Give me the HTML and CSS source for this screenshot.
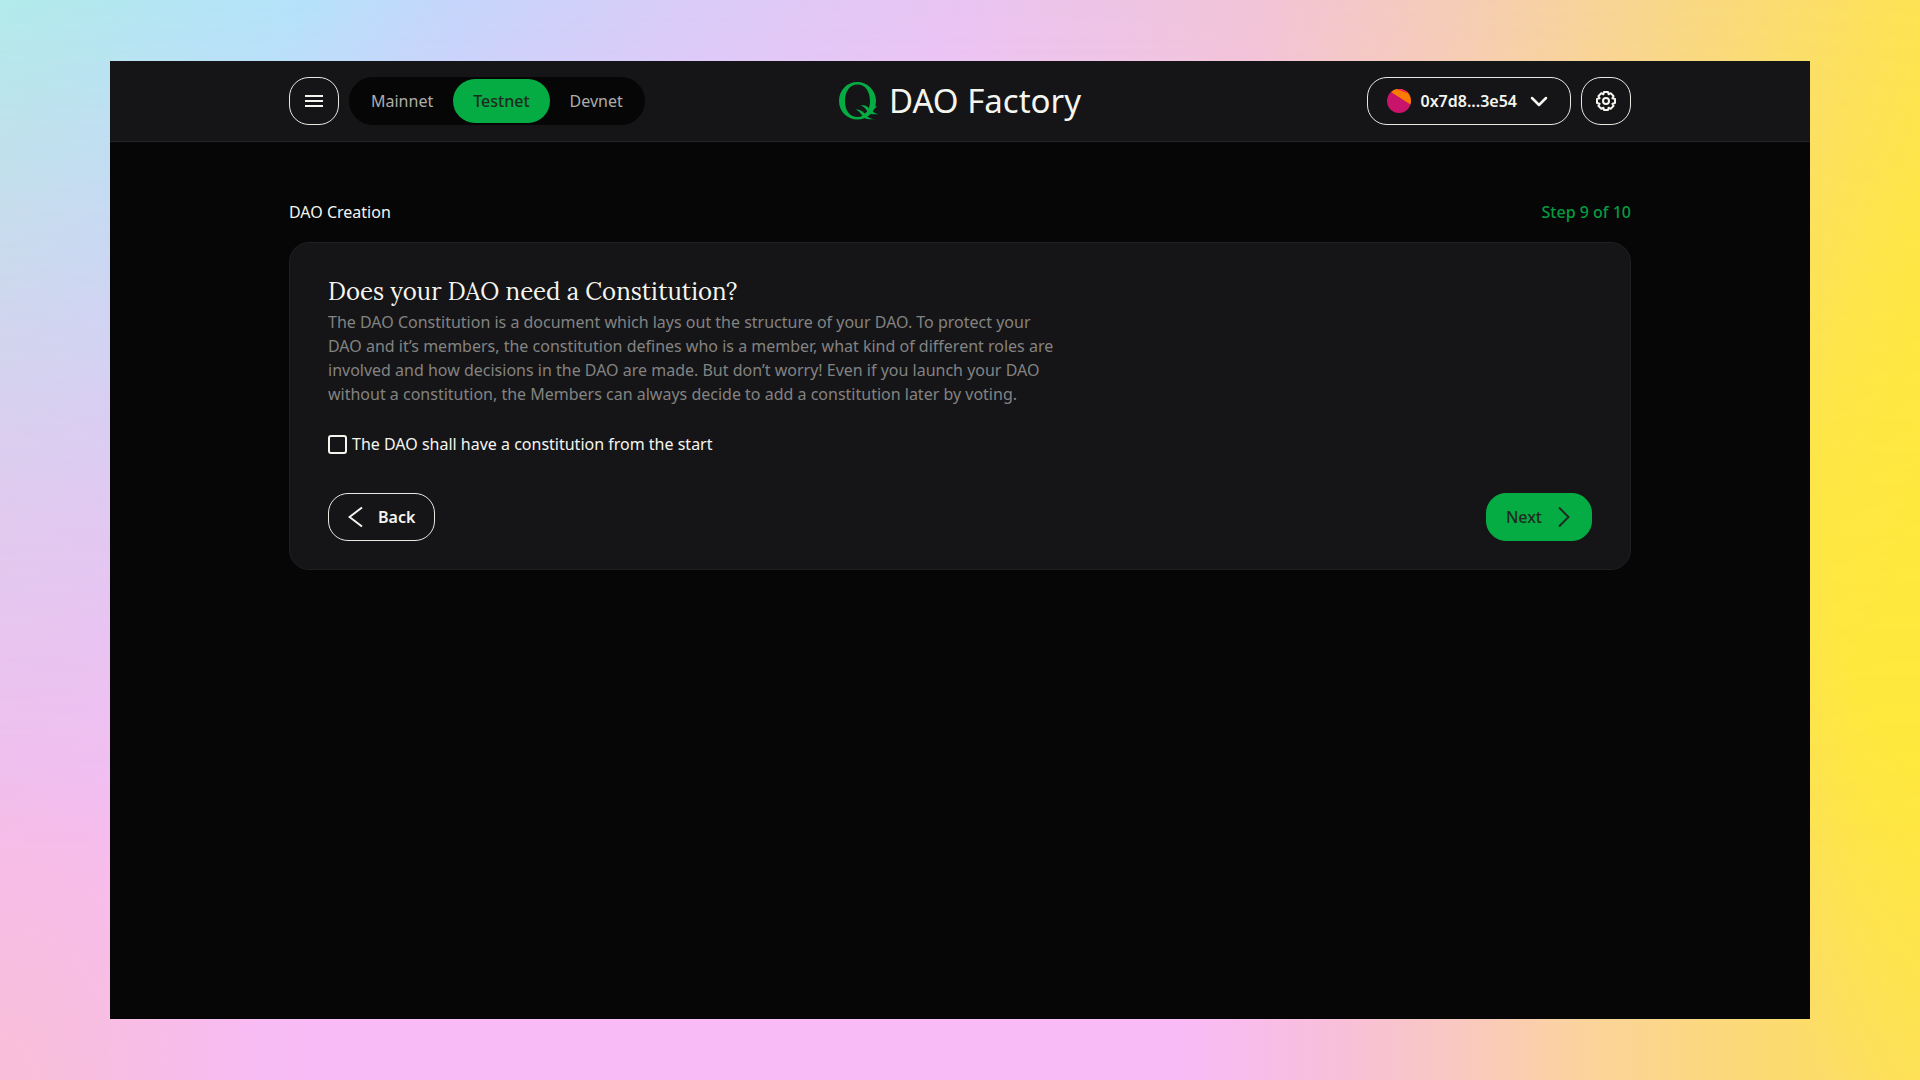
FILE: index.html
```html
<!DOCTYPE html>
<html lang="en">
<head>
<meta charset="utf-8">
<title>DAO Factory</title>
<link rel="stylesheet" href="styles.css">
</head>
<body>
<div class="app">
  <header class="header">
    <div class="header-inner">
      <div class="header-left">
        <button class="btn btn-square" type="button" aria-label="Menu">
          <svg width="24" height="24" viewBox="0 0 24 24" fill="none" stroke="currentColor" stroke-width="2"><path d="M3 7h18M3 12h18M3 17h18"/></svg>
        </button>
        <nav class="networks" aria-label="Network">
          <a class="network" href="#mainnet">Mainnet</a>
          <a class="network network-active" href="#testnet" aria-current="true">Testnet</a>
          <a class="network" href="#devnet">Devnet</a>
        </nav>
      </div>
      <a class="brand" href="#home">
        <svg class="brand-logo" width="42" height="40" viewBox="0 0 42 40" fill="currentColor" aria-hidden="true">
          <path fill-rule="evenodd" d="M18.500 1C28 1 37 9 37 20S28 38.500 18.500 38.500 0 31 0 20 8 1 18.500 1ZM18.500 3.400C10.500 3.400 6 10.500 6 20S10.500 36 18.500 36 31 29.500 31 20 26.500 3.400 18.500 3.400Z"/>
          <path d="M21 24.500C26 23.500 28 25 31 28 34 31 37 33.300 42 33.300H35C31 33.300 29 31 27 28.500 25 26 23.500 24.700 21 24.500ZM16 28.500C21 28 23 29.500 26 33 29 36.500 32 38.200 37 38.200H30C26 38.200 24 36 22 33 20 30.200 18.500 29 16 28.500Z"/>
          <path d="M35 25 24.500 33.500 27 35 38 25.500Z"/>
        </svg>
        <span>DAO Factory</span>
      </a>
      <div class="header-right">
        <button class="btn btn-account" type="button">
          <svg width="24" height="24" viewBox="0 0 24 24" aria-hidden="true"><circle cx="12" cy="12" r="12" fill="#c9146c"/><path d="M4 3A12 12 0 0 1 24 12L23.500 15.500Z" fill="#f77c00"/><path d="M10 .2A12 12 0 0 1 21 4.200Z" fill="#f9156c"/></svg>
          <span>0x7d8...3e54</span>
          <svg class="chevron" width="24" height="24" viewBox="0 0 24 24" fill="none" stroke="currentColor" stroke-width="2.500" stroke-linecap="round" stroke-linejoin="round" aria-hidden="true"><path d="M5 9l7 7 7-7"/></svg>
        </button>
        <button class="btn btn-square" type="button" aria-label="Settings">
          <svg width="24" height="24" viewBox="0 0 24 24" fill="none" stroke="currentColor" stroke-width="2" stroke-linejoin="round"><circle cx="12" cy="12" r="3"/><path d="M10 3h4l.6 2.300 2.100-1.100 2.900 2.900-1.200 2.200 2.600.7v4l-2.600.7 1.200 2.200-2.900 2.900-2.100-1.100L14 21h-4l-.6-2.300-2.100 1.100-2.900-2.900 1.200-2.200L3 14v-4l2.600-.7-1.200-2.200 2.900-2.900 2.100 1.100Z"/></svg>
        </button>
      </div>
    </div>
  </header>
  <main class="main">
    <div class="progress">
      <span>DAO Creation</span>
      <span class="step">Step 9 of 10</span>
    </div>
    <form class="card">
      <h1 class="title">Does your DAO need a Constitution?</h1>
      <p class="description">The DAO Constitution is a document which lays out the structure of your DAO. To protect your DAO and it’s members, the constitution defines who is a member, what kind of different roles are involved and how decisions in the DAO are made. But don’t worry! Even if you launch your DAO without a constitution, the Members can always decide to add a constitution later by voting.</p>
      <label class="option">
        <input class="checkbox" type="checkbox">
        <span>The DAO shall have a constitution from the start</span>
      </label>
      <div class="actions">
        <button class="btn btn-back" type="button">
          <svg width="16" height="24" viewBox="0 0 16 24" fill="none" stroke="currentColor" stroke-width="2" aria-hidden="true"><path d="M14 2.500L1.500 12 14 21.500"/></svg>
          <span>Back</span>
        </button>
        <button class="btn btn-next" type="submit">
          <span>Next</span>
          <svg width="16" height="24" viewBox="0 0 16 24" fill="none" stroke="currentColor" stroke-width="2" aria-hidden="true"><path d="M3 2.500l9.500 9.500L3 21.500"/></svg>
        </button>
      </div>
    </form>
  </main>
</div>
</body>
</html>
```
FILE: styles.css
```css
* {
  box-sizing: border-box;
}

body {
  position: relative;
  z-index: 0;
  margin: 0;
  min-height: 100vh;
  display: flex;
  padding: 61px 110px;
  background:
    radial-gradient(ellipse 12% 60% at 100% 45%, #ffe93c 0%, #ffe93c 40%, rgba(255, 233, 60, 0) 100%),
    radial-gradient(ellipse 14% 30% at 0% 100%, #f9bfd8 0%, rgba(249, 191, 216, 0) 100%),
    linear-gradient(90deg, #f6bcee 0%, #f8bbf5 16%, #f8bbf5 62%, #f8c0d8 70%, #f9c8c0 76%, #fbd49a 83%, #fcda72 92%, #fee05a 100%);
  color: #f5f5f0;
  font-family: "Noto Sans", "Open Sans", sans-serif;
  font-size: 16px;
  line-height: 24px;
}

/* Cool upper tint that fades down into the pink base */
body::before {
  content: "";
  position: absolute;
  inset: 0;
  z-index: -1;
  background: linear-gradient(100deg, #b2ebea 0%, #b4e2fa 14%, #c6d5fb 22%, #dacbf8 33%, #eac4f2 46%, #f2c4d6 60%, #f5ccb6 69%, #f9d884 80%, #fce060 88%, #ffe742 95%);
  mask-image: linear-gradient(180deg, #000 0%, rgba(0, 0, 0, 0.7) 20%, rgba(0, 0, 0, 0.35) 45%, transparent 80%);
}

.app {
  flex: 1;
  min-width: 0;
  background: #060607;
}

.header {
  padding: 0 24px;
  background: #151517;
  border-bottom: 1px solid #242427;
}

.header-inner,
.main {
  max-width: 1342px;
  margin: 0 auto;
}

.header-inner {
  display: grid;
  grid-template-columns: 1fr auto 1fr;
  align-items: center;
  height: 80px;
}

.header-left,
.header-right {
  display: flex;
  gap: 10px;
}

.header-right {
  justify-content: flex-end;
}

.btn {
  display: flex;
  align-items: center;
  justify-content: center;
  height: 48px;
  padding: 0 19px;
  border: 1px solid #e9e9e4;
  border-radius: 20px;
  background: transparent;
  color: inherit;
  font: inherit;
  font-weight: 600;
  cursor: pointer;
}

.btn-square {
  width: 50px;
  padding: 0;
}

.btn-account {
  gap: 10px;
}

.networks {
  display: flex;
  align-items: center;
  padding: 2px;
  height: 48px;
  border-radius: 24px;
  background: #060607;
}

.network {
  display: flex;
  align-items: center;
  height: 44px;
  padding: 0 20px;
  border-radius: 22px;
  color: #adadab;
  text-decoration: none;
}

.network-active {
  background: #05ac43;
  color: #1d2b20;
  font-weight: 500;
}

.brand {
  display: flex;
  align-items: center;
  gap: 8px;
  color: inherit;
  font-size: 33px;
  line-height: 40px;
  text-decoration: none;
}

.brand-logo {
  color: #05ac43;
}

.main {
  padding: 58px 0;
}

.progress {
  display: flex;
  justify-content: space-between;
}

.step {
  color: #059c3f;
  font-weight: 500;
}

.card {
  margin-top: 18px;
  padding: 33px 38px 28px;
  border: 1px solid #202023;
  border-radius: 20px;
  background: #151517;
}

.title {
  margin: 0;
  font-family: Lora, "Liberation Serif", serif;
  font-size: 24px;
  font-weight: 400;
  line-height: 32px;
}

.description {
  max-width: 732px;
  margin: 2px 0 0;
  color: #838382;
}

.option {
  display: flex;
  align-items: center;
  width: fit-content;
  gap: 5px;
  margin-top: 26px;
}

.checkbox {
  appearance: none;
  width: 19px;
  height: 19px;
  margin: 0;
  border: 2px solid #f5f5f0;
  border-radius: 3px;
}

.checkbox:checked {
  background: #05ac43;
}

.actions {
  display: flex;
  justify-content: space-between;
  margin-top: 37px;
}

.btn-back,
.btn-next {
  gap: 14px;
}

.btn-next {
  border-color: #05ac43;
  background: #05ac43;
  color: #1d2b20;
  font-weight: 500;
}
```
